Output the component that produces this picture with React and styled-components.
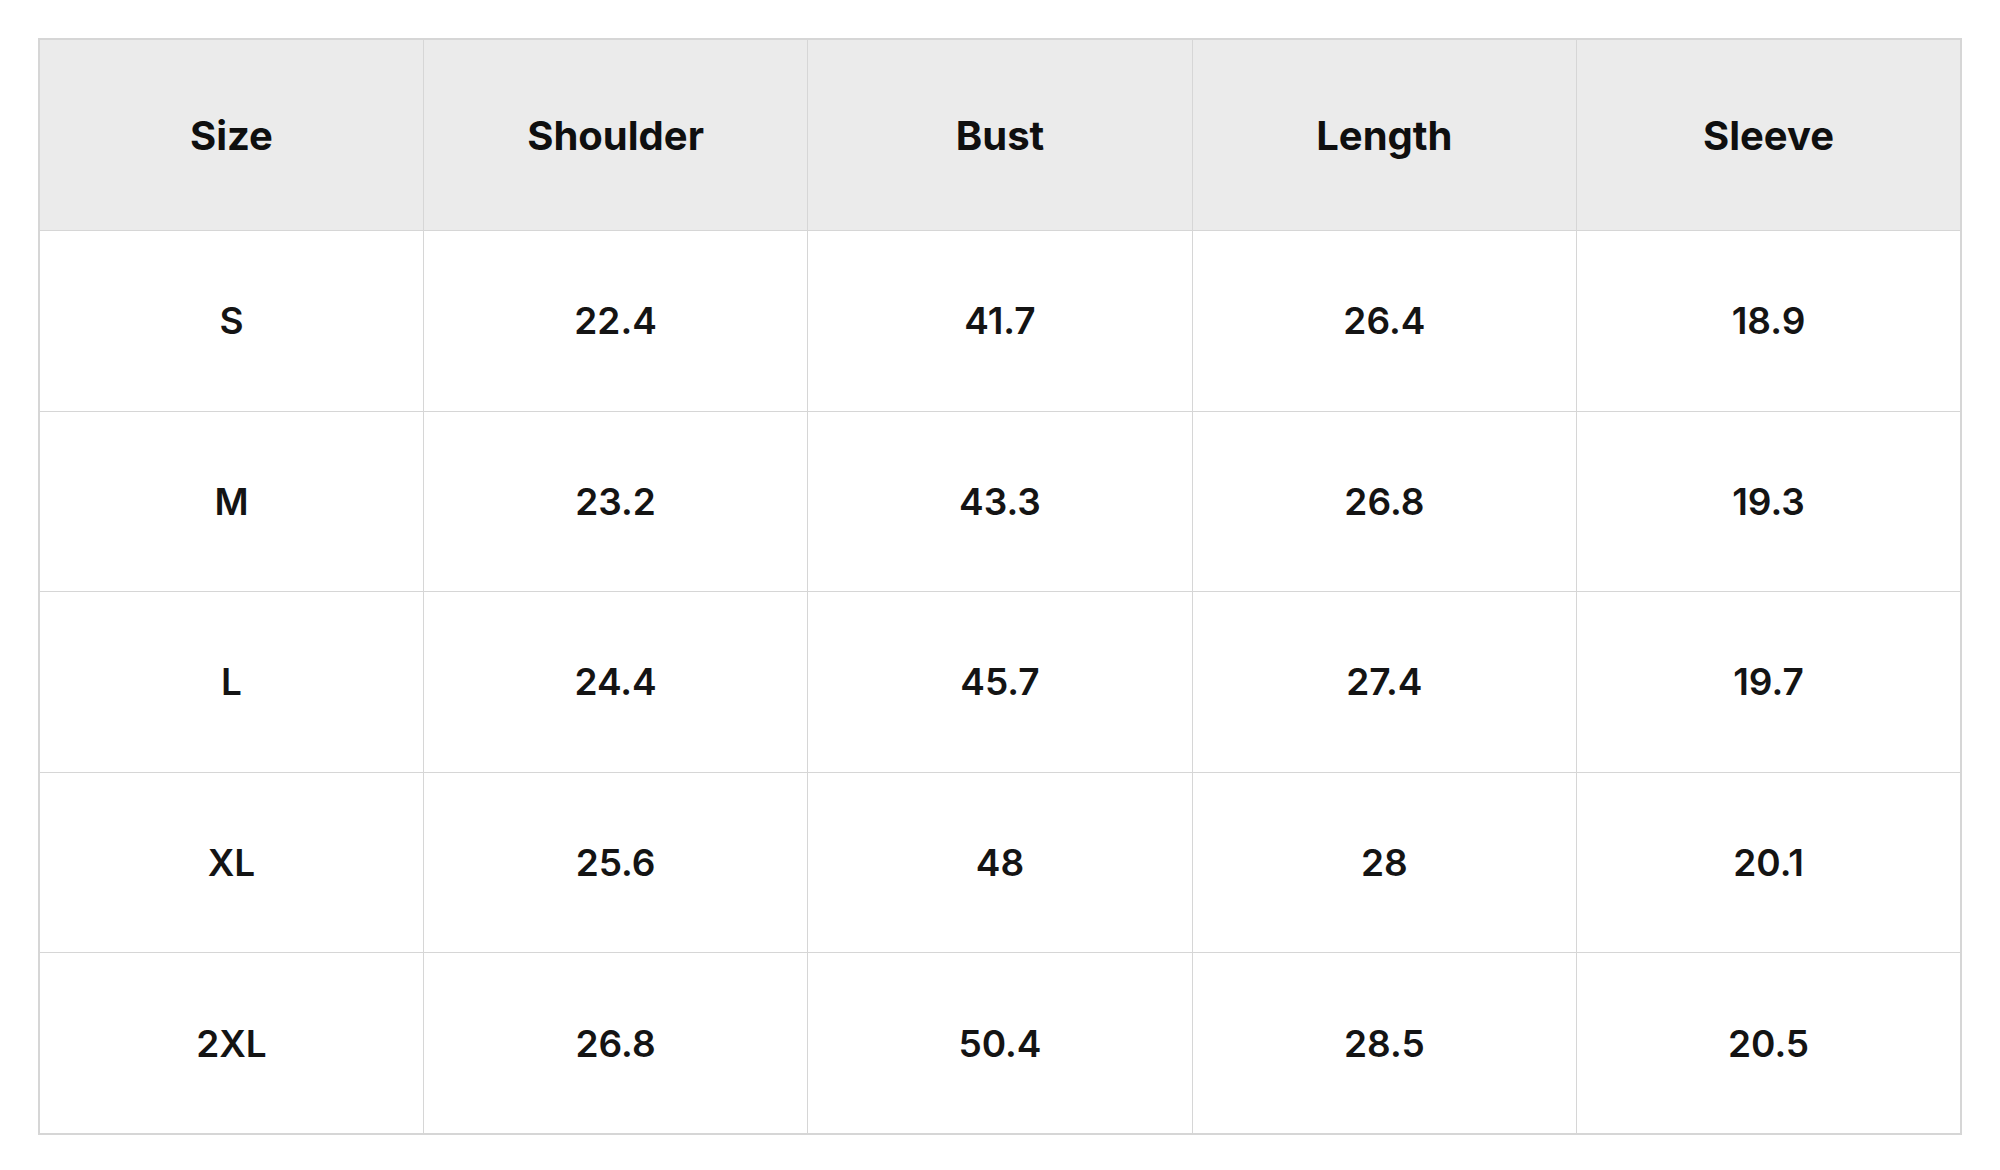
import styled, { createGlobalStyle } from 'styled-components';

const GlobalStyle = createGlobalStyle`
    html, body {
        margin: 0;
        padding: 0;
        background: #ffffff;
    }

    body {
        font-family: Inter, "Liberation Sans", Arial, sans-serif;
        color: #111111;
    }
`;

const PageStyled = styled.div`
    padding: 38px 38px;
`;

const TableStyled = styled.table`
    width: 100%;
    border-collapse: collapse;
    table-layout: fixed;
    border: 2px solid #d6d6d6;
`;

const HeadCell = styled.th`
    height: 190px;
    padding: 0;
    background: #ebebeb;
    border: 1px solid #d6d6d6;
    font-size: 40px;
    font-weight: 700;
    text-align: center;
    vertical-align: middle;
    color: #0f0f0f;
`;

const BodyCell = styled.td`
    height: 179.6px;
    padding: 0;
    border: 1px solid #d6d6d6;
    font-size: 37px;
    font-weight: 570;
    text-align: center;
    vertical-align: middle;
    color: #141414;
`;

const columns = ['Size', 'Shoulder', 'Bust', 'Length', 'Sleeve'];

const rows = [
    ['S', '22.4', '41.7', '26.4', '18.9'],
    ['M', '23.2', '43.3', '26.8', '19.3'],
    ['L', '24.4', '45.7', '27.4', '19.7'],
    ['XL', '25.6', '48', '28', '20.1'],
    ['2XL', '26.8', '50.4', '28.5', '20.5'],
];

export default function App() {
    return (
        <>
            <GlobalStyle />
            <PageStyled>
                <TableStyled>
                    <thead>
                        <tr>
                            {columns.map(col => <HeadCell key={col}>{col}</HeadCell>)}
                        </tr>
                    </thead>
                    <tbody>
                        {rows.map(row => (
                            <tr key={row[0]}>
                                {row.map((value, i) => <BodyCell key={i}>{value}</BodyCell>)}
                            </tr>
                        ))}
                    </tbody>
                </TableStyled>
            </PageStyled>
        </>
    );
}
